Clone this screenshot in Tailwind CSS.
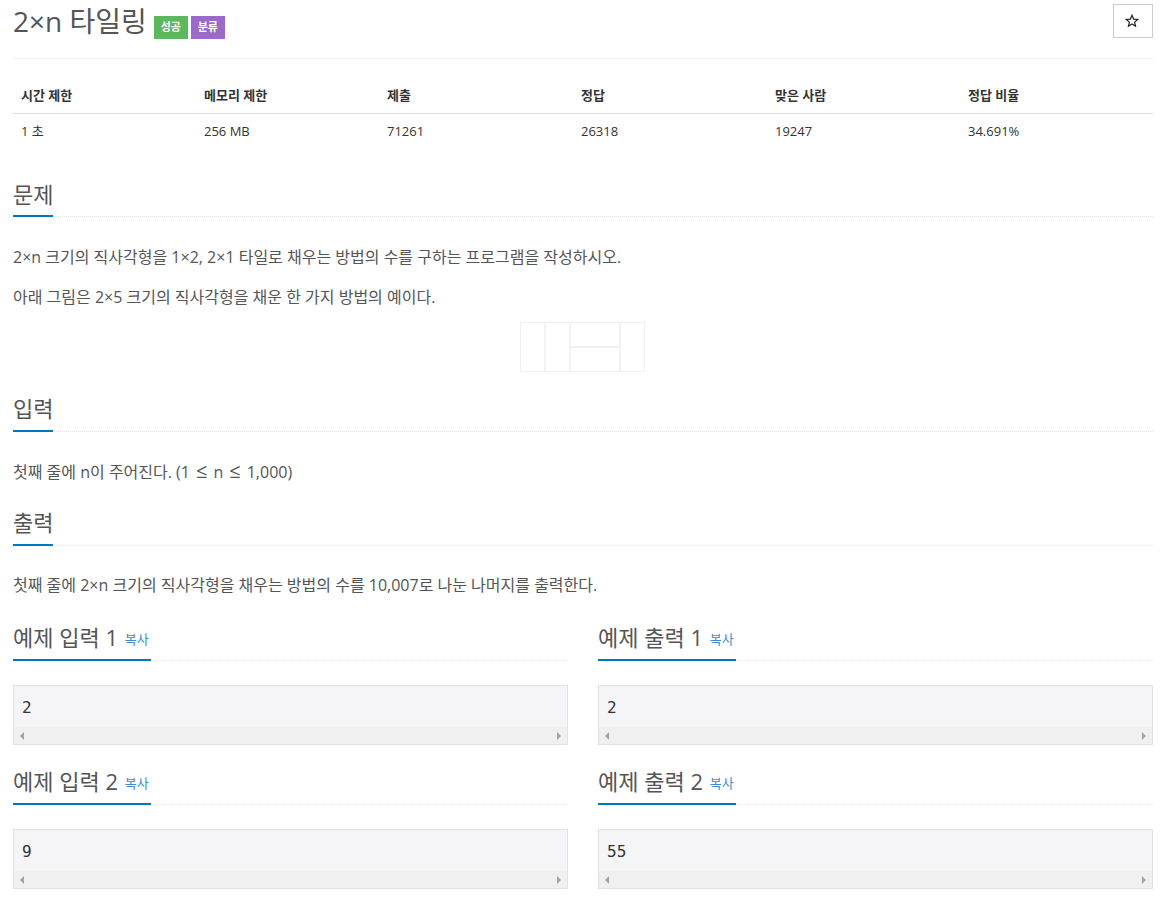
<!DOCTYPE html>
<html lang="ko">
<head>
    <meta charset="UTF-8">
    <title>2×n 타일링</title>
    <script src="https://cdn.jsdelivr.net/npm/@tailwindcss/browser@4"></script>
</head>
<body class="bg-white text-[#555] text-[16px] font-['Open_Sans','Noto_Sans_CJK_KR',sans-serif] overflow-hidden">
    <div class="w-[1165px] h-[901px] pl-[13px] pr-[12px]">
        <!-- 제목 -->
        <div class="h-[59px] border-b border-[#eee] flex items-start justify-between">
            <div class="flex items-start pt-[2px]">
                <h1 class="text-[28px] leading-[38px] text-[#555]">2×n 타일링</h1>
                <span class="ml-[7px] mt-[14px] h-[23px] w-[34px] bg-[#5cb85c] text-white text-[11px] font-bold flex items-center justify-center">성공</span>
                <span class="ml-[3px] mt-[14px] h-[23px] w-[34px] bg-[#9b69c9] text-white text-[11px] font-bold flex items-center justify-center">분류</span>
            </div>
            <button class="mt-[4px] w-[40px] h-[34px] border border-[#ccc] flex items-center justify-center">
                <svg class="mb-[2px] mr-[2px]" width="14" height="13" viewBox="0 0 14 13" fill="none" stroke="#222" stroke-width="1.2"><path d="M7 1.2l1.6 3.9 4.2.3-3.2 2.7 1 4.1L7 9.9l-3.6 2.3 1-4.1L1.2 5.4l4.2-.3z"/></svg>
            </button>
        </div>

        <!-- 제한 표 -->
        <div class="mt-[19px] grid grid-cols-[183px_183px_194px_194px_193px_193px] text-[13px]">
            <div class="h-[36px] border-b border-[#ddd] px-[8px] pt-[1px] flex items-center font-bold text-[#333]">시간 제한</div>
            <div class="h-[36px] border-b border-[#ddd] px-[8px] pt-[1px] flex items-center font-bold text-[#333]">메모리 제한</div>
            <div class="h-[36px] border-b border-[#ddd] px-[8px] pt-[1px] flex items-center font-bold text-[#333]">제출</div>
            <div class="h-[36px] border-b border-[#ddd] px-[8px] pt-[1px] flex items-center font-bold text-[#333]">정답</div>
            <div class="h-[36px] border-b border-[#ddd] px-[8px] pt-[1px] flex items-center font-bold text-[#333]">맞은 사람</div>
            <div class="h-[36px] border-b border-[#ddd] px-[8px] pt-[1px] flex items-center font-bold text-[#333]">정답 비율</div>
            <div class="h-[36px] px-[8px] flex items-center text-[#333]">1 초</div>
            <div class="h-[36px] px-[8px] flex items-center text-[#333]">256 MB</div>
            <div class="h-[36px] px-[8px] flex items-center text-[#333]">71261</div>
            <div class="h-[36px] px-[8px] flex items-center text-[#333]">26318</div>
            <div class="h-[36px] px-[8px] flex items-center text-[#333]">19247</div>
            <div class="h-[36px] px-[8px] flex items-center text-[#333]">34.691%</div>
        </div>

        <!-- 문제 -->
        <div class="mt-[28px] h-[39px] border-b border-dotted border-[#e5e5e5] relative">
            <h2 class="text-[22px] leading-[33px]">문제</h2>
            <div class="absolute left-0 bottom-[-1px] w-[40px] h-[2px] bg-[#0076c0]"></div>
        </div>
        <p class="mt-[29px] leading-[22px]">2×n 크기의 직사각형을 1×2, 2×1 타일로 채우는 방법의 수를 구하는 프로그램을 작성하시오.</p>
        <p class="mt-[18px] leading-[22px]">아래 그림은 2×5 크기의 직사각형을 채운 한 가지 방법의 예이다.</p>
        <svg class="block ml-[507px] mt-[14px]" width="125" height="50" viewBox="0 0 125 50" fill="none" stroke="#f0f0f0">
            <rect x="0.5" y="0.5" width="124" height="49"/>
            <path d="M25 0V50M50 0V50M100 0V50" stroke-width="1.5"/>
            <path d="M50 25H100" stroke-width="2"/>
        </svg>

        <!-- 입력 -->
        <div class="mt-[21px] h-[39px] border-b border-dotted border-[#e5e5e5] relative">
            <h2 class="text-[22px] leading-[30px]">입력</h2>
            <div class="absolute left-0 bottom-[-1px] w-[40px] h-[2px] bg-[#0076c0]"></div>
        </div>
        <p class="mt-[28px] leading-[22px]">첫째 줄에 n이 주어진다. (1<span class="mx-[6px] text-[20px]">≤</span>n<span class="mx-[6px] text-[20px]">≤</span>1,000)</p>

        <!-- 출력 -->
        <div class="mt-[24px] h-[39px] border-b border-dotted border-[#e5e5e5] relative">
            <h2 class="text-[22px] leading-[30px]">출력</h2>
            <div class="absolute left-0 bottom-[-1px] w-[40px] h-[2px] bg-[#0076c0]"></div>
        </div>
        <p class="mt-[28px] leading-[22px]">첫째 줄에 2×n 크기의 직사각형을 채우는 방법의 수를 10,007로 나눈 나머지를 출력한다.</p>

        <!-- 예제 -->
        <div class="mt-[26px] grid grid-cols-2 gap-x-[30px] gap-y-[21px]">
            <div>
                <div class="h-[39px] border-b border-dotted border-[#e5e5e5] relative">
                    <h2 class="text-[22px] leading-[31px]">예제 입력 1 <a class="ml-[1px] text-[13px] align-[2px] text-[#428bca]">복사</a></h2>
                    <div class="absolute left-0 bottom-[-1px] w-[138px] h-[2px] bg-[#0076c0]"></div>
                </div>
                <div class="mt-[24px] h-[60px] border border-[#e1e1e8] bg-[#f5f5f7] flex flex-col">
                    <pre class="flex-1 px-[8px] pt-[12px] text-[16px] leading-[20px] text-[#333] font-['DejaVu_Sans_Mono',monospace]">2</pre>
                    <div class="h-[17px] bg-[#f0f0f0] flex items-center justify-between px-[6px]"><span class="w-0 h-0 border-y-[4px] border-y-transparent border-r-[4px] border-r-[#a3a3a3]"></span><span class="w-0 h-0 border-y-[4px] border-y-transparent border-l-[4px] border-l-[#a3a3a3]"></span></div>
                </div>
            </div>
            <div>
                <div class="h-[39px] border-b border-dotted border-[#e5e5e5] relative">
                    <h2 class="text-[22px] leading-[31px]">예제 출력 1 <a class="ml-[1px] text-[13px] align-[2px] text-[#428bca]">복사</a></h2>
                    <div class="absolute left-0 bottom-[-1px] w-[138px] h-[2px] bg-[#0076c0]"></div>
                </div>
                <div class="mt-[24px] h-[60px] border border-[#e1e1e8] bg-[#f5f5f7] flex flex-col">
                    <pre class="flex-1 px-[8px] pt-[12px] text-[16px] leading-[20px] text-[#333] font-['DejaVu_Sans_Mono',monospace]">2</pre>
                    <div class="h-[17px] bg-[#f0f0f0] flex items-center justify-between px-[6px]"><span class="w-0 h-0 border-y-[4px] border-y-transparent border-r-[4px] border-r-[#a3a3a3]"></span><span class="w-0 h-0 border-y-[4px] border-y-transparent border-l-[4px] border-l-[#a3a3a3]"></span></div>
                </div>
            </div>
            <div>
                <div class="h-[39px] border-b border-dotted border-[#e5e5e5] relative">
                    <h2 class="text-[22px] leading-[31px]">예제 입력 2 <a class="ml-[1px] text-[13px] align-[2px] text-[#428bca]">복사</a></h2>
                    <div class="absolute left-0 bottom-[-1px] w-[138px] h-[2px] bg-[#0076c0]"></div>
                </div>
                <div class="mt-[24px] h-[60px] border border-[#e1e1e8] bg-[#f5f5f7] flex flex-col">
                    <pre class="flex-1 px-[8px] pt-[12px] text-[16px] leading-[20px] text-[#333] font-['DejaVu_Sans_Mono',monospace]">9</pre>
                    <div class="h-[17px] bg-[#f0f0f0] flex items-center justify-between px-[6px]"><span class="w-0 h-0 border-y-[4px] border-y-transparent border-r-[4px] border-r-[#a3a3a3]"></span><span class="w-0 h-0 border-y-[4px] border-y-transparent border-l-[4px] border-l-[#a3a3a3]"></span></div>
                </div>
            </div>
            <div>
                <div class="h-[39px] border-b border-dotted border-[#e5e5e5] relative">
                    <h2 class="text-[22px] leading-[31px]">예제 출력 2 <a class="ml-[1px] text-[13px] align-[2px] text-[#428bca]">복사</a></h2>
                    <div class="absolute left-0 bottom-[-1px] w-[138px] h-[2px] bg-[#0076c0]"></div>
                </div>
                <div class="mt-[24px] h-[60px] border border-[#e1e1e8] bg-[#f5f5f7] flex flex-col">
                    <pre class="flex-1 px-[8px] pt-[12px] text-[16px] leading-[20px] text-[#333] font-['DejaVu_Sans_Mono',monospace]">55</pre>
                    <div class="h-[17px] bg-[#f0f0f0] flex items-center justify-between px-[6px]"><span class="w-0 h-0 border-y-[4px] border-y-transparent border-r-[4px] border-r-[#a3a3a3]"></span><span class="w-0 h-0 border-y-[4px] border-y-transparent border-l-[4px] border-l-[#a3a3a3]"></span></div>
                </div>
            </div>
        </div>
    </div>
</body>
</html>
